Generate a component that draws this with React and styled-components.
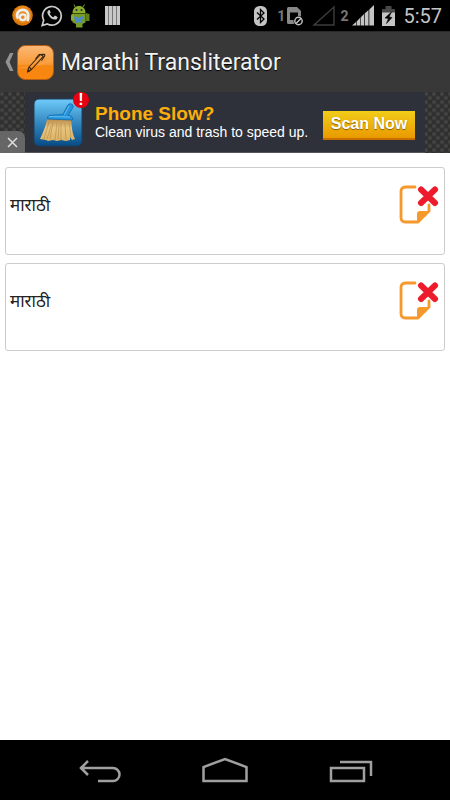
import React from 'react'
import styled, { createGlobalStyle } from 'styled-components'

const GlobalStyle = createGlobalStyle`
   * {
      box-sizing: border-box;
   }

   body {
      margin: 0;
      background: #fff;
      font-family: Roboto, "Noto Sans", sans-serif;
   }

   button {
      padding: 0;
      border: 0;
      background: none;
      font: inherit;
      cursor: pointer;
   }

   svg {
      display: block;
   }
`

const Screen = styled.div`
   display: flex;
   flex-direction: column;
   min-height: 100vh;
`

const StatusBar = styled.div`
   display: flex;
   align-items: center;
   justify-content: space-between;
   height: 31px;
   padding: 0 8px 0 12px;
   background: #000;
`

const StatusGroup = styled.div`
   display: flex;
   align-items: center;
   gap: ${props => props.$gap}px;
`

const Sim = styled.div`
   display: flex;
   align-items: center;
   gap: ${props => props.$gap}px;
   color: #777;
   font-size: 14px;
   font-weight: 700;
   line-height: 20px;
`

const Clock = styled.time`
   color: #c4c4c4;
   font-size: 20px;
   line-height: 30px;
`

const Header = styled.header`
   display: flex;
   align-items: center;
   height: 61px;
   padding: 0 4px;
   background: #383838;
   border-top: 1px solid #2a2a2a;
`

const UpButton = styled.button`
   display: flex;
   align-items: center;
   gap: 2px;
`

const Title = styled.h1`
   margin: 0;
   padding: 2px 0 0 7px;
   color: #f2f2f2;
   font-size: 23px;
   font-weight: 400;
   line-height: 32px;
   text-shadow: 0 1px 1px #000;
`

const Banner = styled.aside`
   position: relative;
   display: flex;
   justify-content: center;
   height: 61px;
   background-color: #2f2f2f;
   background-image:
      radial-gradient(circle at 2px 2px, #454443 1px, transparent 3px),
      radial-gradient(circle at 6px 6px, #454443 1px, transparent 3px);
   background-size: 8px 8px;
`

const Ad = styled.div`
   display: flex;
   align-items: center;
   width: 400px;
   padding: 0 10px 0 8px;
   background: #2e313a;
   border-bottom: 1px solid #55575d;
   font-family: "Liberation Sans", Arial, sans-serif;
`

const AdIcon = styled.div`
   position: relative;
   width: 50px;
   flex: none;
`

const Alert = styled.span`
   position: absolute;
   top: -6px;
   right: -6px;
   width: 16px;
   height: 16px;
   border-radius: 50%;
   background: #e60012;
   color: #fff;
   font-size: 16px;
   font-weight: 700;
   line-height: 16px;
   text-align: center;
`

const AdText = styled.div`
   flex: 1;
   padding-left: 12px;
   white-space: nowrap;
`

const AdTitle = styled.div`
   color: #fcae0b;
   font-size: 19px;
   font-weight: 700;
   line-height: 20px;
`

const AdLine = styled.div`
   color: #fff;
   font-size: 14px;
   line-height: 16px;
`

const ScanButton = styled.button`
   && {
      flex: none;
      width: 92px;
      height: 29px;
      margin-top: 6px;
      background: linear-gradient(#f2cd1a, #e99a00);
      border-bottom: 2px solid #c96f00;
      color: #fff;
      font-size: 16px;
      font-weight: 700;
      line-height: 26px;
      text-shadow: 0 1px 1px #8a5a00;
      white-space: nowrap;
   }
`

const CloseAd = styled.button`
   && {
      position: absolute;
      left: 0;
      bottom: 0;
      display: grid;
      place-items: center;
      width: 25px;
      height: 22px;
      border-radius: 0 7px 0 0;
      background: #666;
   }
`

const List = styled.ul`
   display: flex;
   flex: 1;
   flex-direction: column;
   gap: 8px;
   margin: 0;
   padding: 14px 5px;
   list-style: none;
`

const Card = styled.li`
   display: flex;
   align-items: flex-start;
   justify-content: space-between;
   height: 88px;
   padding: 17px 5px 0 4px;
   border: 1px solid #ccc;
   border-radius: 3px;
   background: #fff;
`

const Word = styled.span`
   padding-top: 6px;
   color: #222;
   font-family: "Noto Sans", "Noto Sans Devanagari", sans-serif;
   font-size: 17px;
   line-height: 28px;
`

const NavBar = styled.nav`
   display: flex;
   align-items: center;
   justify-content: center;
   gap: 80px;
   height: 60px;
   padding-top: 2px;
   background: #000;
`

const NavButton = styled.button`
   width: 46px;
   height: 32px;
`

function AvastIcon() {
   return (
      <svg width="21" height="21" viewBox="0 0 21 21">
         <circle cx="10.500" cy="10.500" r="10.300" fill="#d9760c" />
         <circle cx="10.500" cy="9.500" r="8.500" fill="#e98b1c" />
         <path d="M5.600 12.500C4 8 7 4.800 10.500 4.800c4 0 6 2.700 5.700 6.200l-.4 4.200" fill="none" stroke="#eee" strokeWidth="2.800" strokeLinecap="round" />
         <circle cx="10.800" cy="12.200" r="2.900" fill="#e98b1c" stroke="#eee" strokeWidth="2.200" />
      </svg>
   )
}

function WhatsappIcon() {
   return (
      <svg width="22" height="23" viewBox="0 0 22 23">
         <path d="M1.200 21.500l1.500-5.300a9.300 9.300 0 1 1 3.600 3.700z" fill="none" stroke="#ccc" strokeWidth="1.700" />
         <path d="M7.500 6.200c-1.500 1-1.500 2.800-.2 4.700 1.800 2.900 4.200 4.700 6.800 4.700 1.500 0 2.600-1.100 2.500-2.600l-2.700-1.400-1.500 1.600c-1.700-.7-2.900-1.900-3.700-3.500l1-1.300-1.100-2.400z" fill="#ccc" />
      </svg>
   )
}

function AndroidIcon() {
   return (
      <svg width="20" height="24" viewBox="0 0 20 24">
         <path d="M4 3L3 .500M12 3l1.500-2.500" stroke="#7b9b25" />
         <path d="M1.500 9C1.500 4.500 4.500 2 8 2s6.500 2.500 6.500 7z" fill="#8bad2c" />
         <path d="M1.500 9.500h13v9l-3 1.500v3.500H5V20l-3.500-1.500z" fill="#769a24" />
         <path d="M14.500 9l4 1v7h-4z" fill="#5f8020" />
         <rect y="10" width="3" height="7" rx="1.500" fill="#8bad2c" />
         <circle cx="5.500" cy="6" r="1" fill="#223" />
         <circle cx="10.500" cy="6" r="1" fill="#223" />
         <path d="M3.500 12l4 2 4-2 1 2-2 2.500 1.500 3-4-1.500-4 1.500 1-3-2-2z" fill="#4a8ac8" />
      </svg>
   )
}

function StripesIcon() {
   return (
      <svg width="15" height="19" viewBox="0 0 15 19">
         <path d="M0 0h15v19H0z" fill="#777" />
         <path d="M0 0h3v19H0zM4 0h3v19H4zM8 0h3v19H8zM12 0h3v19h-3z" fill="#c8c8c8" />
      </svg>
   )
}

function BluetoothIcon() {
   return (
      <svg width="13" height="20" viewBox="0 0 13 20">
         <rect width="13" height="20" rx="5.500" fill="#c4c4c4" />
         <path d="M3 6.500l7 6.500-3.500 3.500v-13L10 7l-7 6.500" fill="none" stroke="#000" strokeWidth="1.300" />
      </svg>
   )
}

function SimIcon() {
   return (
      <svg width="17" height="20" viewBox="0 0 17 20">
         <path d="M1.500 1H10l4 4v13H1.500Q0 18 0 16.500v-14Q0 1 1.500 1z" fill="#888" />
         <path d="M3 6.500h8V14H3z" fill="#000" />
         <circle cx="11.500" cy="15" r="5" fill="#000" />
         <circle cx="11.500" cy="15" r="3.700" fill="none" stroke="#c4c4c4" strokeWidth="1.400" />
         <path d="M9 17.500l5-5" stroke="#c4c4c4" strokeWidth="1.400" />
      </svg>
   )
}

function NoSignalIcon() {
   return (
      <svg width="23" height="21" viewBox="0 0 23 21">
         <path d="M2 20L22 2v18z" fill="none" stroke="#3d3d3d" strokeWidth="1.400" />
      </svg>
   )
}

function SignalIcon() {
   return (
      <svg width="22" height="21" viewBox="0 0 22 21">
         <path d="M0 20.500L4 17v3.500zM4.600 16.500L8 13v7.500H4.600zM8.600 12.500L12 9v11.500H8.600zM12.700 8.500L16.500 5v15.500h-3.800zM17.300 4.500L22 0v20.500h-4.700z" fill="#c4c4c4" />
      </svg>
   )
}

function BatteryIcon() {
   return (
      <svg width="13" height="20" viewBox="0 0 13 20">
         <path d="M3.500 0h6v3H13v5H0V3h3.500z" fill="#484848" />
         <path d="M0 6.500h13V20H0z" fill="#c4c4c4" />
         <path d="M9.500 6L3 12l3.500.5-2 5L10 11.500 7 11z" fill="#000" stroke="#000" strokeWidth=".6" />
      </svg>
   )
}

function ChevronIcon() {
   return (
      <svg width="11" height="20" viewBox="0 0 11 20">
         <path d="M6 1h3.500L5.500 10l4 9H6L1.500 10z" fill="#929292" />
      </svg>
   )
}

function PenIcon() {
   return (
      <svg width="37" height="35" viewBox="0 0 37 35">
         <defs>
            <linearGradient id="penFill" x2="0" y2="1">
               <stop offset="0" stopColor="#fbb878" />
               <stop offset=".55" stopColor="#f99a35" />
               <stop offset=".6" stopColor="#f68712" />
               <stop offset="1" stopColor="#f9860f" />
            </linearGradient>
         </defs>
         <rect x=".5" y=".5" width="36" height="34" rx="8" fill="url(#penFill)" stroke="#b65f12" />
         <path d="M2 23q18-1 33-8" fill="none" stroke="#fbac55" opacity=".6" />
         <g fill="none" stroke="#3a250e" strokeWidth="1.100" strokeLinejoin="round">
            <path d="M10.500 27l1.500-5L23.500 9.500l2.800 1.800L14.500 24.500z" />
            <path d="M12 22l2.500 2.500M18.500 14L22 9.500l5.500-.3.300 1.600-3.300 5" />
         </g>
         <path d="M10 27.500l1-3.500 2.500 2z" fill="#3a250e" />
      </svg>
   )
}

function BroomIcon() {
   return (
      <svg width="50" height="49" viewBox="0 0 50 49">
         <defs>
            <linearGradient id="tile" x2="0" y2="1">
               <stop offset="0" stopColor="#6fcbfa" />
               <stop offset=".5" stopColor="#3588c0" />
               <stop offset="1" stopColor="#064c86" />
            </linearGradient>
            <linearGradient id="straw" x2="0" y2="1">
               <stop offset="0" stopColor="#b98a48" />
               <stop offset=".4" stopColor="#e8c57d" />
               <stop offset="1" stopColor="#dcb264" />
            </linearGradient>
         </defs>
         <rect x="1" y="1" width="48" height="47" rx="5" fill="url(#tile)" stroke="#1d3e5e" />
         <path d="M14 21l24 1c1 7 1 13 4 19l-3 1-2-3v3l-4 1-5-1-4 1-4-1-5 1-2-1-6-1c3-7 6-13 7-20z" fill="url(#straw)" />
         <path d="M16 24l-5 17M20 24l-3 17M24 25l-2 17M28 25v17M32 25l1 17M36 25l2 14M18 28l-4 13M26 27l-1 14" fill="none" stroke="#a97f42" strokeWidth=".5" />
         <path d="M16 17.500l14-1 4.500-9q1.500-2.500 4-1.500 2.500 1 1.500 3.500l-5 8 3 .5q2 1 1.500 4l-25-1q-.5-2.500 1.500-3.500z" fill="#2695dc" stroke="#126ba9" strokeWidth=".8" />
         <path d="M31.500 16.500L36 8M16 18.500l21 .5" stroke="#71c7f4" strokeWidth=".8" />
      </svg>
   )
}

function DeleteIcon() {
   return (
      <svg width="40" height="40" viewBox="0 0 40 40">
         <path d="M16 2H6.500Q2 2 2 6.500v26Q2 37 6.500 37H19L30 26v-6" fill="none" stroke="#f7982b" strokeWidth="2.800" strokeLinejoin="round" strokeLinecap="round" />
         <path d="M18 38V29q0-3 3-3h10.500z" fill="#f7982b" />
         <path d="M22 4.500l14 13.500M36 4.500L22 18" stroke="#ec1c2c" strokeWidth="6" strokeLinecap="round" />
      </svg>
   )
}

function WordCard(props) {
   return (
      <Card>
         <Word lang="mr">{props.word}</Word>
         <button aria-label="Delete">
            <DeleteIcon />
         </button>
      </Card>
   )
}

const words = ['माराठी', 'माराठी']

function App() {
   return (
      <Screen>
         <GlobalStyle />
         <StatusBar>
            <StatusGroup $gap={14}>
               <StatusGroup $gap={8}>
                  <AvastIcon />
                  <WhatsappIcon />
                  <AndroidIcon />
               </StatusGroup>
               <StripesIcon />
            </StatusGroup>
            <StatusGroup $gap={8}>
               <StatusGroup $gap={10}>
                  <BluetoothIcon />
                  <Sim $gap={2}>1<SimIcon /></Sim>
               </StatusGroup>
               <StatusGroup $gap={5}>
                  <NoSignalIcon />
                  <Sim $gap={4}>2<SignalIcon /></Sim>
               </StatusGroup>
               <BatteryIcon />
               <Clock>5:57</Clock>
            </StatusGroup>
         </StatusBar>

         <Header>
            <UpButton aria-label="Back">
               <ChevronIcon />
               <PenIcon />
            </UpButton>
            <Title>Marathi Transliterator</Title>
         </Header>

         <Banner>
            <Ad>
               <AdIcon>
                  <BroomIcon />
                  <Alert>!</Alert>
               </AdIcon>
               <AdText>
                  <AdTitle>Phone Slow?</AdTitle>
                  <AdLine>Clean virus and trash to speed up.</AdLine>
               </AdText>
               <ScanButton>Scan Now</ScanButton>
            </Ad>
            <CloseAd aria-label="Close ad">
               <svg width="11" height="11" viewBox="0 0 11 11">
                  <path d="M1 1l9 9M10 1l-9 9" stroke="#ddd" strokeWidth="1.500" />
               </svg>
            </CloseAd>
         </Banner>

         <List>
            {words.map((word, i) => <WordCard key={i} word={word} />)}
         </List>

         <NavBar>
            <NavButton aria-label="Back">
               <svg width="46" height="32" viewBox="0 0 46 32" fill="none" stroke="#a0a0a0" strokeWidth="2.500">
                  <path d="M4 13h33a6.500 6.500 0 0 1 0 13H22M12 6L5 13l7 7" />
               </svg>
            </NavButton>
            <NavButton aria-label="Home">
               <svg width="46" height="32" viewBox="0 0 46 32" fill="none" stroke="#a0a0a0" strokeWidth="2.500">
                  <path d="M1.500 26V12L23 4l21.500 8v14z" />
               </svg>
            </NavButton>
            <NavButton aria-label="Recent apps">
               <svg width="46" height="32" viewBox="0 0 46 32" fill="none" stroke="#a0a0a0" strokeWidth="2.500">
                  <path d="M3 13h33v13H3zM12 7h31v14" />
               </svg>
            </NavButton>
         </NavBar>
      </Screen>
   )
}

export default App
